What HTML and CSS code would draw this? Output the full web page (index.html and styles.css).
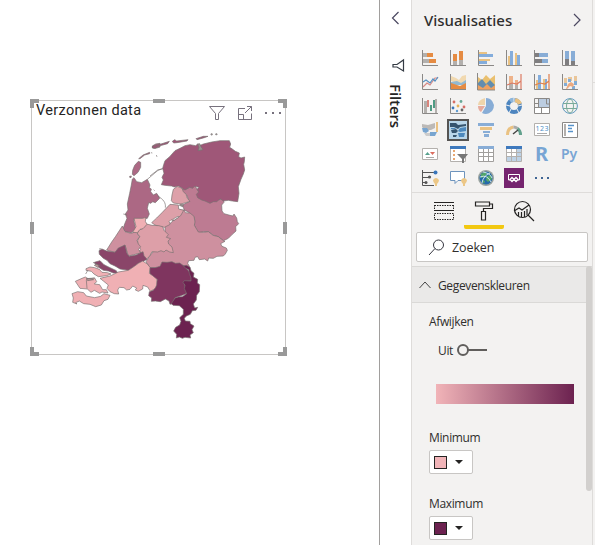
FILE: index.html
```html
<!DOCTYPE html>
<html lang="nl">
<head>
<meta charset="utf-8">
<title>Verzonnen data</title>
<link rel="stylesheet" href="styles.css">
</head>
<body>
<div class="app">
<main class="canvas">
  <section class="visual">
    <i class="handle tl"></i><i class="handle tc"></i><i class="handle tr"></i>
    <i class="handle ml"></i><i class="handle mr"></i>
    <i class="handle bl"></i><i class="handle bc"></i><i class="handle br"></i>
    <header class="visual-head">
      <h1>Verzonnen data</h1>
      <svg class="tools" width="76" height="18" viewBox="0 0 76 18" fill="none" stroke="#77717d">
        <path d="M1.500 1.500h15l-6 7v6h-3v-6z"/>
        <path d="M37 3.500h-6.500v11h13v-6M30.500 9.500h5v5M37 8l6.500-6.500M39 1.500h4.500v4.500"/>
        <path d="M57 8h2m5 0h2m5 0h2" stroke-width="2"/>
      </svg>
    </header>
    <svg class="map" width="190" height="210" viewBox="0 0 570 630" stroke="#77706f" stroke-width="2" stroke-linejoin="round">
      <g>
        <path fill="#ac6884" d="M222 143l8 12 15 3 17-10 8 17-2 8 6 4-2 8 8 10 10-5 6 9 3 6-13 13-8-3-5 5-7-2-4 17 6 17-6 13-41 5 6 25-13 13-18-3-7-8 5-15 7-17-5-13 8-12-2-18 7-32 5-25 3-18z"/>
        <path fill="#ac6884" d="M235 94l7 3 0 15-8 15-12 10-5-4 1-12 6-15zM236 86l13-11 20-8v4l-15 4-14 11zM277 48l10-6 13-2v11l-13 4-10-1zM209 139l5-1-1 5-4-1z"/>
        <path fill="none" d="M262 148l32-27 14-5M281 179l3 3M289 77l2 1M190 252l12 3"/>
      </g>
      <g transform="translate(270 0)">
        <path fill="#bd7b92" d="M85 175L105 178 133 165 150 190 145 203 175 210 219 207 222 217 215 225 216 243 222 251 240 256 249 258 252 252 260 264 262 275 266 281 257 290 258 303 247 313 235 325 227 329 220 332 205 320 190 316 175 305 160 305 145 308 138 297 133 285 134 270 132 260 120 258 118 248 103 240 97 225 118 215 110 195z"/>
        <path fill="#9f5778" d="M38 115L41 104 45 92 59 80 75 62 90 55 105 47 120 44 137 47 143 42 148 47 160 42 185 36 210 32 238 32 242 42 239 52 247 57 256 64 268 69 266 80 273 84 284 81 283 95 281 103 284 120 280 132 273 148 265 170 267 190 263 215 247 213 235 211 220 213 212 207 205 211 200 215 190 215 180 220 165 213 155 210 143 203 139 193 146 186 141 178 147 172 133 169 128 175 119 172 105 180 95 174 85 168 73 171 65 168 45 166 34 164 40 150 36 142 42 130z"/>
        <path fill="#9f5778" d="M8 48l25-6 25-8-5 7-26 7-12 7-7-1zM67 34l7-5 6 4 34-4-3 4-30 5-10 1zM138 26l22-7 14 0-11 4-22 6zM181 13h8m-4-4v8M195 13h8m-4-4v7"/>
        <path fill="#dda0a9" d="M70 178L82 169 96 175 100 185 108 193 112 205 120 214 104 219 92 222 70 219 64 212 66 195z"/>
        <path fill="#99908f" d="M143 42l6-1 4 9 6 9-15 3 3-10zM92 222l8 3-2 5-10-4z"/>
        <path fill="none" d="M23 198c17 10 25 20 23 35M3 68l4 1M18 77l4 2M0 138L23 120 38 116"/>
      </g>
      <g transform="translate(255 240)">
        <path fill="#ce909f" d="M103 0L118 0 121 8 135 9 147 19 150 36 148 46 160 66 175 67 190 65 204 76 220 80 235 92 240 94 227 101 231 109 244 114 247 121 241 132 235 138 216 139 205 145 191 144 188 153 179 147 163 149 158 140 150 142 147 151 131 152 128 160 133 169 115 172 85 164 50 165 45 172 15 174 3 155 12 140 25 125 60 110 60 50z"/>
        <path fill="#dda0a9" d="M20 38L35 24 52 7 75-17 100-15 101-3 116 1 107 17 87 31 77 35 74 44 58 52 43 49 30 45z"/>
        <path fill="#dd9fa8" d="M-20 62L-5 54 5 42 21 46 41 47 53 50 57 61 70 74 64 82 77 86 69 93 71 102 81 111 85 128 74 126 63 120 57 126 48 122 38 126 21 125 14 138 4 148-7 138-12 126-21 129-13 118-22 105-22 91-16 79-24 70z"/>
        <path fill="#7f355f" d="M14 173L30 173 45 169 51 156 66 157 81 155 91 160 104 159 117 168 136 188 142 212 117 215 126 250 112 256 90 263 84 280 75 283 72 273 61 267 46 275 31 273 19 274 20 264 11 257 13 245 26 240 30 225 37 209 22 206 15 195z"/>
        <path fill="#6c2250" d="M115 167L124 166 135 171 138 182 147 190 145 201 158 208 157 219 164 224 163 245 155 256 154 270 145 282 149 294 158 292 153 301 142 302 136 313 124 318 118 325 121 333 135 334 136 341 147 348 141 359 145 368 135 375 137 384 120 382 112 385 103 381 94 384 95 373 86 363 92 352 104 345 108 334 104 323 115 313 115 298 103 287 84 286 79 281 90 264 100 261 112 260 125 251 118 236 120 226 114 217 118 212 138 213 138 204 133 190 131 179 122 175z"/>
        <path fill="#fff" d="M72 35l6-6 6 3-8 8zM83 28l16-9 3 2-15 10z"/>
      </g>
      <g transform="translate(0 240)">
        <path fill="#ce909f" d="M187 48L195 65 213 70 235 63 232 72 239 80 231 91 235 102 242 110 236 118 242 129 205 138 195 105 165 127 140 120 155 96 167 79z"/>
        <path fill="#f0b0b4" d="M222 25h26l10-3-2 12 5 9-12 13-9 2-8 10-14-1 10-17z"/>
        <path fill="#8a4569" d="M117 122L126 117 140 123 165 127 175 114 195 105 201 130 207 139 228 135 249 125 252 137 261 148 248 155 235 161 220 173 205 181 180 177 165 168 150 161 141 151 130 145 118 133zM103 157L120 152 132 164 150 173 169 182 172 189 160 189 145 183 130 181 111 169z"/>
        <path fill="#f0b0b4" d="M120 205L150 198 175 186 205 181 223 169 235 160 248 153 262 162 270 172 268 190 278 197 291 208 290 225 286 234 280 239 271 244 263 231 249 226 248 237 235 244 226 240 230 234 218 228 210 238 200 240 192 233 178 232 173 240 176 252 163 251 150 245 141 235 145 225 130 213zM78 176L90 171 104 173 118 178 126 187 142 188 153 192 140 197 115 200 102 192 94 184 78 181zM46 214L66 205 76 201 86 207 104 204 110 215 103 222 119 224 128 239 139 239 144 249 126 246 119 250 103 241 93 247 82 237 60 235zM36 251L53 245 71 248 79 258 104 263 122 259 132 251 150 256 144 268 132 272 124 285 107 290 90 283 71 281 58 273 47 278 51 282 38 277 40 264z"/>
        <path fill="#bd9a9a" d="M79 207l9-1 13 3-18 3zM103 166l7-4 8 5-5 5z"/>
        <path fill="none" d="M99 157l22 12M84 180l-7 12m2 18l2 25M78 206l26-2M117 117l7-1"/>
      </g>
    </svg>
  </section>
</main>

<aside class="filters">
  <svg width="9" height="14" viewBox="0 0 9 14" fill="none" stroke="#4b4861" stroke-width="1.200"><path d="M7.500 1L1.500 7l6 6"/></svg>
  <svg class="funnel" width="13" height="13" viewBox="0 0 13 13" fill="none" stroke="#343b44" stroke-width="1.200"><path d="M1 5.500h4L11.500 1v11L5 8H1z"/></svg>
  <span>Filters</span>
</aside>

<aside class="panel">
  <header class="panel-head"><h2>Visualisaties</h2>
    <svg width="8" height="14" viewBox="0 0 8 14" fill="none" stroke="#4b4861" stroke-width="1.200"><path d="M1 1l6 6-6 6"/></svg>
  </header>
  <div class="gallery">
    <svg viewBox="0 0 16 16"><path fill="#b3b0ad" d="M1 3h4v4H1zm0 6h6v4H1z"/><path fill="#e58b42" d="M5 3h6v4H5zm2 6h7v4H7z"/><path class="axis" d="M.5 0v15.500H16"/></svg>
    <svg viewBox="0 0 16 16"><path fill="#e58b42" d="M3 4h4v7H3zm6-3h4v9H9z"/><path fill="#b3b0ad" d="M3 11h4v4H3zm6-1h4v5H9z"/><path class="axis" d="M.5 0v15.500H16"/></svg>
    <svg viewBox="0 0 16 16"><path fill="#eac282" d="M1 2h8v2H1zm0 7h11v2H1z"/><path fill="#84addc" d="M1 4h14v3H1zm0 7h8v3H1z"/><path class="axis" d="M.5 0v15.500H16"/></svg>
    <svg viewBox="0 0 16 16"><path fill="#eac282" d="M2 6h2v9H2zm7-3h2v12H9z"/><path fill="#84addc" d="M4 1h3v14H4zm7 4h3v10h-3z"/><path class="axis" d="M.5 0v15.500H16"/></svg>
    <svg viewBox="0 0 16 16"><path fill="#7f7e80" d="M1 3h4v4H1zm0 6h7v4H1z"/><path fill="#88add6" d="M5 3h9v4H5zm3 6h6v4H8z"/><path class="axis" d="M.5 0v15.500H16"/></svg>
    <svg viewBox="0 0 16 16"><path fill="#88add6" d="M3 1h4v8H3zm6 0h4v10H9z"/><path fill="#7f7e80" d="M3 9h4v6H3zm6 2h4v4H9z"/><path class="axis" d="M.5 0v15.500H16"/></svg>

    <svg viewBox="0 0 16 16"><path class="ln" stroke="#d78a86" d="M1 13l4-4 3 2 5-7h3"/><path class="ln" stroke="#5791c3" d="M1 8l3-2 4 3 3-4 2 2 3-4"/><path class="axis" d="M.5 0v15.500H16"/></svg>
    <svg viewBox="0 0 16 16"><path fill="#f1d9b0" d="M1 2l5 2 3 2 3-4 4-1v7l-6 2-9-3z"/><path fill="#91b9d2" d="M1 8l6-1 4 2 5-3v5H1z"/><path fill="#e58b42" d="M1 9l6 2 3 1 6-3v6H1z"/><path class="axis" d="M.5 0v15.500H16"/></svg>
    <svg viewBox="0 0 16 16"><path fill="#eac06f" d="M0 3l4 3 4-5 4 4 5-4v15H0z"/><path fill="#628dae" d="M0 9l4-4 4 5 4-4 5 5v4H0z"/><path fill="#eea160" d="M0 11l5 3 4-4 4 4 4-3v5H0z"/><path class="axis" d="M-.500-1v17H17"/></svg>
    <svg viewBox="0 0 16 16"><path fill="#b3b0ad" d="M3 8h4v7H3zm6-1h3v8H9z"/><path fill="#eeb38a" d="M3 2h4v7H3zm6 4h3v5H9z"/><path class="ln" stroke="#dc7b63" d="M1 11l5-2 5 1 4-3V0v15"/><path class="axis" d="M.5 0v15.500H16"/></svg>
    <svg viewBox="0 0 16 16"><path fill="#eac282" d="M2 6h2v9H2zm7-1h2v10H9z"/><path fill="#84addc" d="M4 1h3v14H4zm7 4h2v10h-2z"/><path class="ln" stroke="#df7e4c" d="M1 11l5-2 5 1 4-3V0v15"/><path class="axis" d="M.5 0v15.500H16"/></svg>
    <svg viewBox="0 0 16 16"><path fill="#e9c69a" d="M2 4h3v5H2zm4-1h4v4H6zm6-1h3v5h-3z"/><path fill="#81acd5" d="M2 9h3v3H2zm4-4h3v3H6zm6 2h3v4h-3zM10 12h3v3h-3z"/><path fill="#edaa7f" d="M6 10l3-2 3 2-1 3-3-1-3 3H4z"/><path class="axis" d="M.5 0v15.500H16"/></svg>

    <svg viewBox="0 0 16 16"><path fill="#b3b0ad" d="M2 3h3v12H2zm11-2h2v14h-2z"/><path fill="#d8847c" d="M5 2h2v7H5z"/><path fill="#4f9c84" d="M8 7h2v6H8zm3-5h2v8h-2z"/><path class="axis" d="M.5 0v15.500H16"/></svg>
    <svg viewBox="0 0 16 16"><g fill="#d66e64"><circle cx="4" cy="4" r="1.400"/><circle cx="14" cy="9" r="1.400"/></g><circle cx="11" cy="3.500" r="1.400" fill="#67a895"/><circle cx="3" cy="10" r="1.400" fill="#3976bb"/><circle cx="8" cy="8" r="1.400" fill="#e6b157"/><circle cx="12" cy="12" r="1.400" fill="#666"/><circle cx="7" cy="13" r="1.200" fill="#609cd0"/><path class="axis" d="M.5 0v15.500H16"/></svg>
    <svg viewBox="0 0 16 16"><path fill="#88add6" d="M8 0a8 8 0 1 1-4 15l4-7z"/><path fill="#e7ab9d" d="M7 8l-4 6q-3-2-3-6z"/><path fill="#efd5ab" d="M0 7q0-5 7-7v7z"/></svg>
    <svg viewBox="0 0 16 16" fill="none" stroke-width="4"><circle cx="8" cy="8" r="6" stroke="#4d85bf"/><path stroke="#eac282" d="M9 2q4 1 5 4"/><path stroke="#8eb6dc" d="M4 3q2-1.500 4-1"/><path stroke="#f3f2f1" stroke-width="1" d="M8 0v4M0 7l4 1M3 15l2-4M13 15l-2-4M16 7l-4 1"/></svg>
    <svg viewBox="0 0 16 16"><path fill="#bbcce0" d="M4 1h11v8H4z"/><path fill="#fff" d="M1 10h14v5H1z"/><path fill="none" stroke="#8a8886" d="M.5.5h15v15H.5zm0 9h15M4.500 1v8M7.500 9v6M12.500 1v5h3M1 5.500h3"/></svg>
    <svg viewBox="0 0 16 16" fill="none" stroke="#6099c0"><circle cx="8" cy="8" r="7.400"/><g stroke="#79ab9a"><ellipse cx="8" cy="8" rx="3.500" ry="7"/><path d="M1 5.500h14M1 10.500h14"/></g></svg>

    <svg viewBox="0 0 16 16"><path fill="#bcb9b6" d="M0 2l6 1 7-2v5L9 8H3L0 5z"/><path fill="#78a5d0" d="M0 6h5l2 3-3 2-3-1zm8 4h7l-2 4H8z"/><path fill="#eac282" d="M14 0h2v8h-2zm0 8h2v2h-2z"/><path fill="#ccc" d="M2 11h6v3H4z"/></svg>
    <svg viewBox="0 0 16 16"><path fill="#b9d6e9" stroke="#555453" stroke-width="2" d="M-2-2h20v20H-2z"/><path fill="#36556f" d="M0 1h6l2 2 8-1v2l-6 1-2 2-4-2H0zM1 8l5-1 2 2-2 2H2zM3 13h4l-1 2H3z"/><path fill="#4d89bd" d="M10 6l6-1v4l-6 1-2-1zM8 11l7 0-1 4H9zM1 6l4 0 1 1-5 0z"/></svg>
    <svg viewBox="0 0 16 16"><path fill="#88add6" d="M0 1h16v3H0zm5 8h7v2H5zm1 3h5v3H6z"/><path fill="#eac282" d="M2 5h12v3H2z"/></svg>
    <svg viewBox="0 0 16 16" fill="none" stroke-width="3"><path stroke="#eac282" d="M1.500 13q0-7 6-8"/><path stroke="#aaa" d="M7.500 5q2 0 4 1.500"/><path stroke="#62a18d" d="M11.500 6.500q3 2 3 6.500"/><path stroke="#444" stroke-width="1.500" d="M7 12l5-4"/></svg>
    <svg viewBox="0 0 16 16"><path fill="#fff" stroke="#b3b0ad" d="M.5 1.500h15v12H.5z"/><text x="1.500" y="9" font-size="7" fill="#4e8fc7" textLength="13">123</text><path stroke="#aaa" d="M3 11.500h10"/></svg>
    <svg viewBox="0 0 16 16"><path fill="#fff" stroke="#8b8987" d="M.5.5h15v15H.5z"/><path fill="#b3b0ad" d="M2 2h2v12H2z"/><path stroke="#5793ca" stroke-width="1.500" d="M6 3.500h6M6 6.500h4M6 9.500h5"/></svg>

    <svg viewBox="0 0 16 16"><path fill="#fff" stroke="#b3b0ad" d="M.5 2.500h15v11H.5z"/><path fill="#57a18d" d="M3 9l2.500-3L8 9z"/><path fill="#db6d5f" d="M8 6h5l-2.500 3z"/><path stroke="#aaa" d="M4 11.500h8"/></svg>
    <svg viewBox="0 0 16 16"><path fill="#fff" stroke="#b3b0ad" d="M.5.5h15v15H.5z"/><path fill="#3e79bd" d="M0 0h16v3H0z"/><path stroke="#e8a873" stroke-width="2" d="M4 4v2m0 2v2m0 2v2"/><path fill="#777" d="M7 8h11l-4 5v4h-2v-4z"/></svg>
    <svg viewBox="0 0 16 16"><path fill="#fff" stroke="#a19f9d" d="M.5.5h15v15H.5zM1 6.500h14M1 10.500h14M5.500 3v12M10.500 3v12"/><path fill="#88add6" d="M0 0h16v3H0z"/></svg>
    <svg viewBox="0 0 16 16"><path fill="#fff" stroke="#b3b0ad" d="M.5.5h15v15H.5z"/><path fill="#bdd2e6" d="M11 3h4v12H1v-4h10z"/><path fill="none" stroke="#b3b0ad" d="M1 6.500h14M1 10.500h14M5.500 3v12M10.500 3v12"/><path fill="#3e79bd" d="M0 0h16v3H0z"/></svg>
    <b class="r">R</b>
    <b class="py">Py</b>

    <svg viewBox="0 0 16 16"><path fill="none" stroke="#555" d="M.5 0v15.500H12M1 2.500h13M1 7.500h7M1 12.500h4"/><circle cx="13.500" cy="2.500" r="2" fill="#3976bb"/><circle cx="7.500" cy="7" r="1.600" fill="#555"/><circle cx="4" cy="12.500" r="1.500" fill="#555"/><path fill="#ecc786" d="M11 10q3-4 6 0 0 2-2 4v2h-2v-2q-2-2-2-4z"/></svg>
    <svg viewBox="0 0 16 16"><path fill="#fff" stroke="#6e94bd" d="M.5 1.500h14v9H8l-3 3v-3H.5z"/><path fill="#ecc786" d="M11 10q3-4 6 0 0 2-2 4v2h-2v-2q-2-2-2-4z"/></svg>
    <svg viewBox="0 0 16 16"><circle cx="8" cy="8" r="8" fill="#9aa3a0"/><circle cx="8" cy="8" r="6.500" fill="#246aaa"/><path fill="#51a56a" d="M3 4l4-2 2 2-3 3-3 1zm6 2l4-1 1 4-4 3-2-2zM4 10l3 1-1 3z"/><path fill="none" stroke="#d9edf4" stroke-width=".9" d="M2 7q7-3 11 5M5 2q7 1 9 6M4 13q1-7 8-10"/></svg>
    <svg viewBox="0 0 16 16"><path fill="#75246f" d="M-2-2h20v20H-2z"/><path fill="none" stroke="#fff" d="M4 10H2.500V4.500h11V10H12"/><path fill="none" stroke="#fff" stroke-width="1.300" d="M8 9.500L6 7.500 4 9.500l2 2zl2-2 2 2-2 2z"/></svg>
    <svg viewBox="0 0 16 16"><path fill="#3f6594" d="M1 7h2v2H1zm6 0h2v2H7zm6 0h2v2h-2z"/></svg>
  </div>

  <nav class="tabs">
    <div><svg width="22" height="20" viewBox="0 0 22 20" fill="none" stroke="#252423"><path d="M1 1.500h20M1 9.500h20"/><path stroke-dasharray="1.500 1" d="M1.500 4v4M20.500 4v4M1.500 4.500h19M1.500 12.500h19v6h-19z"/></svg></div>
    <div class="active"><svg width="20" height="20" viewBox="0 0 20 20" fill="none" stroke="#252423" stroke-width="1.200"><path d="M1.500 1h14v4h-14zM15.500 3h3v4.500h-9v3M7.500 10.500h4v8.500h-4z"/></svg></div>
    <div><svg width="22" height="22" viewBox="0 0 22 22" fill="none" stroke="#252423" stroke-width="1.200"><circle cx="9.500" cy="8.500" r="8"/><path d="M15 14l6 6M1 10l5-3 3 2 7-5M5.500 11v4M8.500 11v5M11.500 10v6M14 8v6"/></svg></div>
  </nav>
  <div class="search"><svg width="17" height="17" viewBox="0 0 17 17" fill="none" stroke="#353640"><circle cx="10.500" cy="6" r="5"/><path d="M7 9.500L1 16"/></svg><span>Zoeken</span></div>

  <div class="options">
    <div class="section"><svg width="12" height="8" viewBox="0 0 12 8" fill="none" stroke="#444"><path d="M.5 7L6 1l5.500 6"/></svg><span>Gegevenskleuren</span></div>
    <div class="body">
      <label class="name">Afwijken</label>
      <div class="toggle"><span>Uit</span><svg width="31" height="12" viewBox="0 0 31 12" fill="none" stroke="#605e5c" stroke-width="2"><circle cx="6" cy="6" r="5"/><path d="M11 6h19"/></svg></div>
      <div class="gradient"></div>
      <label class="name">Minimum</label>
      <div class="picker"><i class="swatch low"></i><i class="caret"></i></div>
      <label class="name second">Maximum</label>
      <div class="picker"><i class="swatch high"></i><i class="caret"></i></div>
    </div>
    <div class="scroll"></div>
  </div>
</aside>
<div class="edge"></div>
</div>
</body>
</html>
```
FILE: styles.css
```css
* { box-sizing: border-box; }
body { margin: 0; background: #fff; color: #2f2e2d; font-family: "Open Sans", "Noto Sans", sans-serif; overflow: hidden; }
h1, h2 { margin: 0; font-weight: 400; }
svg { display: block; flex: none; overflow: visible; }
.app { display: flex; width: 595px; height: 545px; }
.canvas { width: 379px; flex: none; padding: 100px 0 0 31px; }
.visual { position: relative; width: 255px; height: 255px; border: 1px solid #c8c6c4; }
.visual-head { display: flex; justify-content: space-between; height: 23px; padding: 0 1px 0 4px; }
.visual-head h1 { font: 14.500px/20px Roboto, sans-serif; letter-spacing: .32px; white-space: nowrap; color: #252423; }
.tools { margin-top: 4px; }
.map { margin: 6px 0 0 28px; }
.handle { position: absolute; background: #999; }
.tc, .bc { width: 12px; height: 4px; left: 121px; }
.tc { top: -2px; }
.bc { bottom: -2px; }
.ml, .mr { width: 4px; height: 12px; top: 121px; }
.ml { left: -2px; }
.mr { right: -2px; }
.tl, .tr, .bl, .br { width: 9px; height: 9px; background: none; border: 0 solid #999; }
.tl { left: -2px; top: -2px; border-width: 4px 0 0 4px; }
.tr { right: -2px; top: -2px; border-width: 4px 4px 0 0; }
.bl { left: -2px; bottom: -2px; border-width: 0 0 4px 4px; }
.br { right: -2px; bottom: -2px; border-width: 0 4px 4px 0; }

.filters { width: 32px; flex: none; border-left: 1px solid #a19f9d; display: flex; flex-direction: column; align-items: center; padding-top: 11px; }
.funnel { margin: 34px 0 0 5px; }
.filters span { writing-mode: vertical-rl; font-size: 15px; line-height: 20px; font-weight: 600; margin: 12px 0 0 1px; letter-spacing: -.1px; color: #252423; }

.panel { width: 182px; flex: none; background: #f3f2f1; border: 1px solid #dedcda; border-width: 0 1px; display: flex; flex-direction: column; }
.panel-head { display: flex; align-items: center; justify-content: space-between; height: 40px; padding: 0 11px 0 12px; margin-bottom: 10px; }
.panel-head h2 { font: 500 15px "Noto Sans", sans-serif; letter-spacing: 0; }
.gallery { display: grid; grid-template-columns: repeat(6, 16px); grid-auto-rows: 16px; gap: 8px 12px; padding-left: 10px; height: 142px; }
.gallery svg { width: 16px; height: 16px; }
.gallery text { font-family: "Noto Sans", sans-serif; }
.axis { fill: none; stroke: #8a8886; }
.ln { fill: none; stroke-width: 1.2; }
.r, .py { color: #78a5d4; line-height: 16px; font-family: "Noto Sans", sans-serif; }
.r { font-size: 20px; padding-left: 1px; }
.py { font-size: 14px; font-weight: 600; margin-left: -1px; }
.tabs { display: flex; border-top: 1px solid #dedcda; height: 37px; padding-left: 12px; }
.tabs div { width: 40px; display: flex; justify-content: center; padding-top: 8px; }
.tabs .active { border-bottom: 4px solid #f2c811; border-radius: 2px; }
.search { display: flex; align-items: center; gap: 7px; height: 30px; margin: 3px 4px 4px; padding-left: 11px; background: #fff; border: 1px solid #c8c6c4; border-radius: 2px; font-size: 12.500px; letter-spacing: -.1px; }
.options { position: relative; flex: 1; font-size: 12px; letter-spacing: -.35px; }
.section { display: flex; align-items: center; gap: 7px; height: 37px; padding: 1px 0 0 7px; background: #eae9e8; border: 1px solid #dad9d7; border-width: 1px 0; letter-spacing: -.35px; }
.body { padding: 9px 17px 0; }
.name { display: block; height: 18px; line-height: 19px; }
.toggle { display: flex; align-items: center; gap: 4px; height: 18px; margin: 11px 0 25px 9px; }
.gradient { width: 138px; height: 20px; margin: 0 0 24px 7px; background: linear-gradient(90deg, #f1b4b8, #6c2250); }
.picker { display: flex; align-items: center; gap: 8px; width: 44px; height: 24px; margin-top: 4px; padding-left: 4px; background: #fff; border: 1px solid #c8c6c4; border-radius: 2px; }
.second { margin-top: 20px; }
.swatch { width: 13px; height: 13px; border: 1px solid #252423; }
.low { background: #f1b4b8; }
.high { background: #6c2250; }
.caret { border: solid transparent; border-width: 4px 4px 0; border-top-color: #252423; }
.scroll { position: absolute; right: 0; top: 0; width: 6px; height: 225px; background: #d2d0ce; border-radius: 3px; }
.edge { flex: 1; background: linear-gradient(#dedcda, #dedcda) 0 82px / 100% 1px no-repeat #f3f2f1; }
```
